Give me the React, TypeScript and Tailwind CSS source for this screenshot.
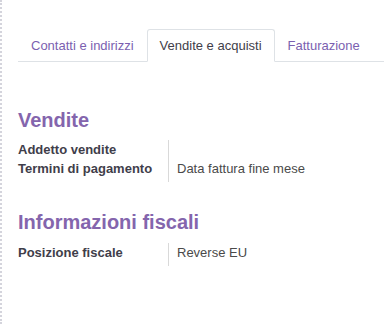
import React from "react";

const tabs = ["Contatti e indirizzi", "Vendite e acquisti", "Fatturazione"];

function Row({ label, value, last }: { label: string; value?: string; last?: boolean }) {
  return (
    <div className="flex">
      <div className={`w-[151px] shrink-0 border-r border-[#d9d9d9] font-bold text-[#3f3e4a] leading-[19px] ${last ? "pb-[4px]" : ""}`}>
        {label}
      </div>
      <div className="pl-[8px] text-[#4a4a4a] leading-[19px]">{value}</div>
    </div>
  );
}

export default function App() {
  const active = 1;
  return (
    <div
      className="h-[324px] w-[384px] bg-white border-l-2 border-dotted border-[#d4d4dc] pl-[16px] pt-[29px] text-[13px]"
      style={{ fontFamily: "'Liberation Sans', Arial, sans-serif" }}
    >
      {/* Tabs */}
      <div className="flex border-b border-[#dee2e6]">
        {tabs.map((t, i) => (
          <div
            key={t}
            className={
              i === active
                ? "h-[33px] -mb-px px-[12px] flex items-center border border-[#dee2e6] border-b-white rounded-t-[3px] bg-white text-[#3f3e4a]"
                : "h-[33px] -mb-px px-[12px] flex items-center border border-transparent text-[#7b5fb0]"
            }
          >
            {t}
          </div>
        ))}
      </div>

      {/* Vendite */}
      <h2 className="mt-[44px] text-[20px] leading-[28px] font-bold text-[#8465ad]">Vendite</h2>
      <div className="mt-[6px]">
        <Row label="Addetto vendite" />
        <Row label="Termini di pagamento" value="Data fattura fine mese" last />
      </div>

      {/* Informazioni fiscali */}
      <h2 className="mt-[26px] text-[20px] leading-[28px] font-bold text-[#8465ad]">Informazioni fiscali</h2>
      <div className="mt-[7px]">
        <Row label="Posizione fiscale" value="Reverse EU" last />
      </div>
    </div>
  );
}
